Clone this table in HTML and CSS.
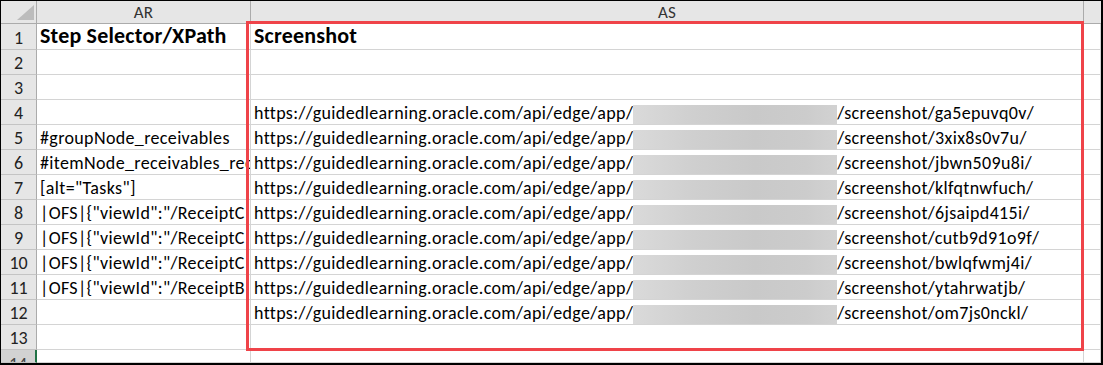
FILE: index.html
```html
<!DOCTYPE html>
<html>
<head>
<meta charset="utf-8">
<link rel="stylesheet" href="styles.css">
</head>
<body>
<div class="page">
  <div class="sheet">
    <div class="corner"><svg class="tri" width="17" height="15" viewBox="0 0 17 15"><polygon points="17,0 17,15 0,15" fill="#bcbcbc"/></svg></div>
    <div class="colhead">AR</div>
    <div class="colhead">AS</div>
    <div class="colhead last"></div>

    <div class="rh r1">1</div>
    <div class="cell r1 bold">Step Selector/XPath</div>
    <div class="cell r1 bold">Screenshot</div>
    <div class="cell r1"></div>

    <div class="rh">2</div><div class="cell"></div><div class="cell"></div><div class="cell"></div>
    <div class="rh">3</div><div class="cell"></div><div class="cell"></div><div class="cell"></div>

    <div class="rh">4</div>
    <div class="cell"></div>
    <div class="cell">https://guidedlearning.oracle.com/api/edge/app/<span class="blur"></span>/screenshot/ga5epuvq0v/</div>
    <div class="cell"></div>

    <div class="rh">5</div>
    <div class="cell">#groupNode_receivables</div>
    <div class="cell">https://guidedlearning.oracle.com/api/edge/app/<span class="blur"></span>/screenshot/3xix8s0v7u/</div>
    <div class="cell"></div>

    <div class="rh">6</div>
    <div class="cell">#itemNode_receivables_rec</div>
    <div class="cell">https://guidedlearning.oracle.com/api/edge/app/<span class="blur"></span>/screenshot/jbwn509u8i/</div>
    <div class="cell"></div>

    <div class="rh">7</div>
    <div class="cell">[alt="Tasks"]</div>
    <div class="cell">https://guidedlearning.oracle.com/api/edge/app/<span class="blur"></span>/screenshot/klfqtnwfuch/</div>
    <div class="cell"></div>

    <div class="rh">8</div>
    <div class="cell">|OFS|{"viewId":"/ReceiptC</div>
    <div class="cell">https://guidedlearning.oracle.com/api/edge/app/<span class="blur"></span>/screenshot/6jsaipd415i/</div>
    <div class="cell"></div>

    <div class="rh">9</div>
    <div class="cell">|OFS|{"viewId":"/ReceiptC</div>
    <div class="cell">https://guidedlearning.oracle.com/api/edge/app/<span class="blur"></span>/screenshot/cutb9d91o9f/</div>
    <div class="cell"></div>

    <div class="rh">10</div>
    <div class="cell">|OFS|{"viewId":"/ReceiptC</div>
    <div class="cell">https://guidedlearning.oracle.com/api/edge/app/<span class="blur"></span>/screenshot/bwlqfwmj4i/</div>
    <div class="cell"></div>

    <div class="rh">11</div>
    <div class="cell">|OFS|{"viewId":"/ReceiptB</div>
    <div class="cell">https://guidedlearning.oracle.com/api/edge/app/<span class="blur"></span>/screenshot/ytahrwatjb/</div>
    <div class="cell"></div>

    <div class="rh">12</div>
    <div class="cell"></div>
    <div class="cell">https://guidedlearning.oracle.com/api/edge/app/<span class="blur"></span>/screenshot/om7js0nckl/</div>
    <div class="cell"></div>

    <div class="rh">13</div><div class="cell"></div><div class="cell"></div><div class="cell"></div>

    <div class="rh active">14</div><div class="cell"></div><div class="cell"></div><div class="cell"></div>
  </div>
  <div class="highlight"></div>
</div>
</body>
</html>
```

FILE: styles.css
```css
html, body {
  margin: 0;
  padding: 0;
  background: #ffffff;
}

.page {
  position: relative;
  width: 1103px;
  height: 365px;
  box-sizing: border-box;
  border-top: 1px solid #000;
  border-left: 1px solid #000;
  border-right: 2px solid #000;
  border-bottom: 2px solid #000;
  overflow: hidden;
  font-family: Carlito, Calibri, Lato, "Liberation Sans", sans-serif;
  font-size: 18px;
  letter-spacing: 0.35px;
  color: #000;
}

.sheet {
  display: grid;
  grid-template-columns: 36px 214px 833px 17px;
  grid-template-rows: 23px 26px repeat(12, 25px) 13px;
}

.corner,
.colhead,
.rh,
.cell {
  box-sizing: border-box;
  overflow: hidden;
  white-space: nowrap;
  display: flex;
}

.corner {
  background: #e6e6e6;
  border-right: 1px solid #ababab;
  border-bottom: 1px solid #ababab;
  justify-content: flex-end;
  align-items: flex-end;
  padding: 0 2px 3px 0;
}

.colhead {
  background: #e6e6e6;
  border-right: 1px solid #ababab;
  border-bottom: 1px solid #ababab;
  justify-content: center;
  align-items: center;
  color: #333;
  font-size: 17px;
  letter-spacing: 0.2px;
  padding-top: 1px;
}

.colhead.last {
  border-right: none;
}

.rh {
  background: #e6e6e6;
  border-right: 1px solid #ababab;
  border-bottom: 1px solid #c4c4c4;
  justify-content: center;
  align-items: flex-end;
  font-size: 18px;
  line-height: 20px;
  letter-spacing: 0;
  padding-bottom: 1px;
  color: #222;
}

.rh.active {
  background: #d2d2d2;
  border-right: 2px solid #217346;
  align-items: flex-start;
  padding-top: 4px;
  color: #444;
}

.cell {
  border-right: 1px solid #d4d4d4;
  border-bottom: 1px solid #d4d4d4;
  align-items: flex-end;
  line-height: 20px;
  padding: 0 0 1px 3px;
}

.cell.bold {
  font-weight: bold;
  font-size: 22px;
  line-height: 24px;
  letter-spacing: 0.2px;
  overflow: visible;
}

.blur {
  display: inline-block;
  width: 204px;
  height: 19px;
  margin-bottom: -1px;
  background: linear-gradient(90deg, #dadada 0%, #cfcfcf 30%, #c9c9c9 60%, #cccccc 85%, #d2d2d2 100%);
  flex-shrink: 0;
}

.highlight {
  position: absolute;
  left: 245px;
  top: 20px;
  width: 838px;
  height: 330px;
  box-sizing: border-box;
  border: 3px solid #ef4349;
  pointer-events: none;
}
```
